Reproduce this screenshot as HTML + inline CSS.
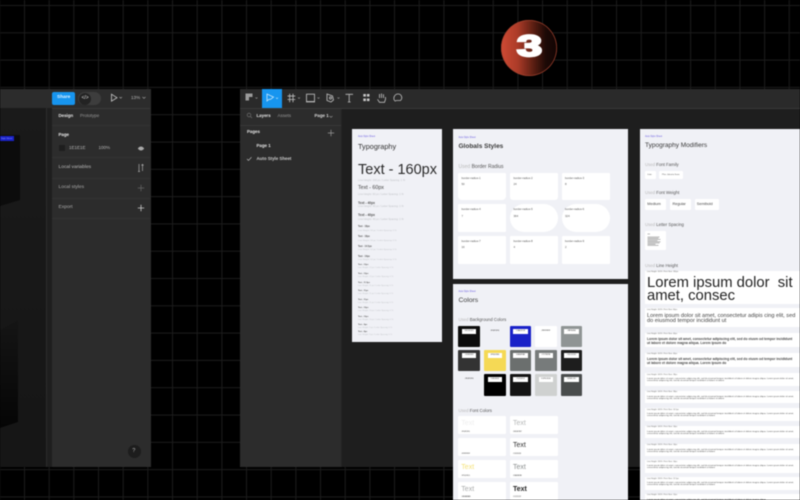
<!DOCTYPE html>
<html lang="en"><head><meta charset="utf-8"><title>Figma style sheet</title>
<style>
html,body{margin:0;padding:0;width:800px;height:500px;overflow:hidden;background:#000}
body{position:relative;font-family:"Liberation Sans",sans-serif}
#all{position:absolute;left:0;top:0;width:800px;height:500px;overflow:hidden;filter:blur(.42px)}
.a,.t{position:absolute}
.t{white-space:nowrap;line-height:1}
.w{color:#e8e8e8;font-size:4.4px;font-weight:700}
.g{color:#b5b5b5;font-size:4.9px}
.s{color:#c2c4c8;font-size:2.6px}
.h{color:#555;font-size:2.9px;font-weight:700}
.b{background:#fff}
.bl{color:#555;font-size:2.8px}
.p{color:#6a5ce0;font-size:2.3px}
.sec{color:#555;font-size:4.3px}
.sec i{color:#bbb;font-style:normal}
.c{position:absolute;width:21.5px;height:21.5px;border-radius:1px}
.c b{position:absolute;left:3.5px;top:3px;width:14.5px;height:5.2px;background:#fff;color:#333;font-size:2.2px;line-height:5.2px;text-align:center;font-weight:400}
.f{position:absolute;width:47.5px;height:18px;background:#fff;border-radius:1px}
.f span{position:absolute;left:3px;top:3.5px;font-size:7px;line-height:1;color:#333}
.f em{position:absolute;left:3px;top:14.4px;font-size:2.1px;line-height:1;color:#444;font-style:normal}
.r{position:absolute;left:645px;width:155px;background:#fff}
.r .l{position:absolute;left:2px;top:1.6px;font-size:1.9px;color:#666;white-space:nowrap;line-height:1}
.r .x{position:absolute;left:2px;top:5px;font-size:2.2px;line-height:2.2px;color:#444;width:152px}
</style></head><body><div id="all">

<svg class="a" style="left:0;top:0" width="800" height="500">
<defs><pattern id="gr" x="-0.67" y="5" width="24.67" height="27.3" patternUnits="userSpaceOnUse">
<rect x="0" y="0" width="1" height="27.3" fill="#1c1c1c"/><rect x="0" y="0" width="24.67" height="1" fill="#1c1c1c"/></pattern></defs>
<rect width="800" height="500" fill="url(#gr)"/></svg>

<!-- badge -->
<div class="a" style="left:501px;top:20px;width:56px;height:56px;border-radius:50%;background:linear-gradient(90deg,#cf4a34 0%,#ab3b28 30%,#5a1e12 58%,#1c0906 80%,#120504 100%);box-shadow:inset 0 0 0 .7px #a5432f"></div>
<div class="t" style="left:516.500px;top:32px;font-size:30px;font-weight:700;color:#fff;-webkit-text-stroke:2.2px #fff;transform:scaleX(1.5);transform-origin:0 0">3</div>

<!-- left window -->
<div class="a" style="left:0;top:89px;width:150.5px;height:378px;background:#2c2c2c"></div>
<div class="a" style="left:0;top:108px;width:52px;height:359px;background:#1e1e1e"></div>
<div class="a" style="left:0;top:108px;width:46px;height:359px;background:linear-gradient(180deg,#1a1a1a,#161616)"></div>
<div class="a" style="left:46px;top:108px;width:1px;height:359px;background:#2c2c2c"></div>
<svg class="a" style="left:0;top:130px" width="24" height="300"><defs><linearGradient id="sh" x1="0" y1="0" x2="0" y2="1"><stop offset="0" stop-color="#151515"/><stop offset="1" stop-color="#050505"/></linearGradient></defs><polygon points="0,5 20,5 20,70 0,76" fill="#0c0c0c"/><polygon points="0,200 18,190 18,292 0,298" fill="url(#sh)"/></svg>
<div class="a" style="left:0;top:136px;width:13.5px;height:5px;background:#1a22c8"></div>
<div class="t" style="left:1px;top:137.500px;font-size:2.200px;color:#9aa0ff">Style Sheet</div>
<div class="a" style="left:52px;top:92px;width:23px;height:13px;background:#1795ef;border-radius:2px"></div>
<div class="t" style="left:57px;top:95.5px;font-size:4.8px;font-weight:700;color:#dff1ff">Share</div>
<div class="a" style="left:78px;top:92px;width:23px;height:13px;background:#3d3d3d;border-radius:7px"></div>
<div class="a" style="left:79px;top:92.5px;width:12px;height:12px;background:#232323;border-radius:50%"></div>
<div class="t" style="left:81.5px;top:95.5px;font-size:5px;color:#ddd">&lt;/&gt;</div>
<svg class="a" style="left:110px;top:93px" width="14" height="10"><path d="M1.5 1.2v7l5.5-3.5z" fill="none" stroke="#ccc" stroke-width=".8"/><path d="M9.5 4l1.2 1.2L12 4" fill="none" stroke="#aaa" stroke-width=".6"/></svg>
<div class="t g" style="left:131px;top:95.5px;font-size:4.6px">13%</div>
<svg class="a" style="left:141.5px;top:95.5px" width="5" height="4"><path d="M.5 1l1.5 1.3L3.500 1" fill="none" stroke="#aaa" stroke-width=".6"/></svg>
<div class="a" style="left:52px;top:107.5px;width:98px;height:.6px;background:#3a3a3a"></div>
<div class="t w" style="left:58.5px;top:114px">Design</div>
<div class="t g" style="left:80px;top:114px;color:#999;font-size:4.5px">Prototype</div>
<div class="a" style="left:52px;top:124.5px;width:98px;height:.6px;background:#333"></div>
<div class="t w" style="left:58.5px;top:132.5px;color:#eee">Page</div>
<div class="a" style="left:59px;top:145px;width:6px;height:6px;background:#1e1e1e"></div>
<div class="t g" style="left:69px;top:145.5px;font-size:4.500px">1E1E1E</div>
<div class="t g" style="left:98.5px;top:145.5px;font-size:4.500px">100%</div>
<svg class="a" style="left:137px;top:144.5px" width="8" height="7"><path d="M.8 3.5c2-2.6 4.4-2.6 6.4 0-2 2.6-4.4 2.6-6.4 0z" fill="#aaa"/></svg>
<div class="a" style="left:52px;top:157px;width:98px;height:.6px;background:#333"></div>
<div class="t g" style="left:58.5px;top:166px;color:#bbb">Local variables</div>
<svg class="a" style="left:137px;top:163px" width="8" height="10"><path d="M2 1v7.5M1 8.5h2M5.5 8V1.5M4.5 2.5l1-1.2 1 1.2" fill="none" stroke="#aaa" stroke-width=".7"/></svg>
<div class="a" style="left:52px;top:178px;width:98px;height:.6px;background:#333"></div>
<div class="t g" style="left:58.5px;top:186px;color:#aaa">Local styles</div>
<svg class="a" style="left:137px;top:184px" width="8" height="8"><path d="M4 .8v6.4M.8 4h6.4" stroke="#666" stroke-width=".7"/></svg>
<div class="a" style="left:52px;top:198px;width:98px;height:.6px;background:#333"></div>
<div class="t g" style="left:58.5px;top:206px;color:#aaa">Export</div>
<svg class="a" style="left:137px;top:204px" width="8" height="8"><path d="M4 .8v6.4M.8 4h6.400" stroke="#ccc" stroke-width=".8"/></svg>
<div class="a" style="left:52px;top:218px;width:98px;height:.6px;background:#333"></div>
<div class="a" style="left:128px;top:445px;width:12.5px;height:12.5px;background:#1d1d1d;border-radius:50%"></div>
<div class="t" style="left:132.3px;top:448.5px;font-size:5.6px;color:#bbb">?</div>

<!-- main window -->
<div class="a" style="left:240px;top:89px;width:560px;height:378px;background:#1e1e1e"></div>
<div class="a" style="left:240px;top:89px;width:560px;height:19px;background:#2a2a2a"></div>
<div class="a" style="left:240px;top:107.5px;width:101px;height:359.5px;background:#2c2c2c"></div>
<div class="a" style="left:341px;top:108px;width:.6px;height:359px;background:#242424"></div>
<div class="a" style="left:240px;top:107.5px;width:560px;height:.6px;background:#3a3a3a"></div>
<div class="a" style="left:261.5px;top:88.5px;width:20px;height:19.5px;background:#1795ef"></div>
<svg class="a" style="left:240px;top:88px" width="170" height="20" fill="none" stroke="#bdbdbd" stroke-width=".85">
<path d="M5.5 5.500h7v3.500H9v3.500H5.500z" fill="#9a9a9a" stroke="none"/><path d="M15.500 9.500l1 1 1-1" stroke="#999" stroke-width=".6"/>
<path d="M27 6v7l2-1.700 1.500 0 3-2.200z" stroke="#bfe3fb"/><path d="M36 9.700l1 1 1-1" stroke="#bfe3fb" stroke-width=".6"/>
<path d="M49.700 5.700v8.500M53 5.700v8.500M47.500 8.100h7.800M47.500 11.500h7.800"/><path d="M58 9.500l1 1 1-1" stroke="#999" stroke-width=".6"/>
<rect x="66.500" y="6.200" width="8" height="7.300"/><path d="M66 13.900h9"/><path d="M77.500 9.500l1 1 1-1" stroke="#999" stroke-width=".6"/>
<path d="M87 6l5.500 2 1 4-2.500 2-4-1.500z"/><circle cx="90.500" cy="10" r="1.100"/><path d="M97.500 9.500l1 1 1-1" stroke="#999" stroke-width=".6"/>
<path d="M105.500 6.300h7.500M109.200 6.300v7.700M107.800 14h2.800"/>
<g fill="#c8c8c8" stroke="none"><rect x="123.300" y="6" width="2.600" height="2.600"/><rect x="126.900" y="6" width="2.600" height="2.600"/><rect x="123.300" y="10.500" width="2.600" height="2.600"/><rect x="126.900" y="10.500" width="2.600" height="2.600"/></g>
<path d="M139.500 10V7.500m0 2.500V6m2 4V5.500m2 4.500V6.300m-6 5l2 3h5l1-3V9"/>
<path d="M155 13c-2.500-2.500-.5-7 3-7 3.500 0 5 4 2.500 6.500h-4z"/>
</svg>
<svg class="a" style="left:246px;top:112px" width="7" height="7" fill="none" stroke="#777" stroke-width=".6"><circle cx="3" cy="3" r="1.800"/><path d="M4.400 4.400l1.600 1.600"/></svg>
<div class="t w" style="left:256.500px;top:113.500px">Layers</div>
<div class="t g" style="left:277.500px;top:113.500px;color:#9a9a9a;font-size:4.500px">Assets</div>
<div class="t w" style="left:314.500px;top:113.500px;color:#ddd">Page 1</div>
<svg class="a" style="left:329px;top:114.500px" width="5" height="4"><path d="M.5 1l1.500 1.300L3.500 1" fill="none" stroke="#999" stroke-width=".6"/></svg>
<div class="a" style="left:240px;top:124.500px;width:101px;height:.6px;background:#383838"></div>
<div class="t w" style="left:247px;top:130px">Pages</div>
<svg class="a" style="left:327px;top:129px" width="8" height="8"><path d="M4 .800v6.400M.8 4h6.400" stroke="#999" stroke-width=".7"/></svg>
<div class="t w" style="left:256.500px;top:143.500px">Page 1</div>
<svg class="a" style="left:246px;top:156px" width="7" height="6"><path d="M1 3l1.500 1.500L5.500 1.200" fill="none" stroke="#ccc" stroke-width=".6"/></svg>
<div class="t w" style="left:256.500px;top:157px;color:#ccc">Auto Style Sheet</div>

<!-- Typography card -->
<div class="a" style="left:352px;top:128.500px;width:90px;height:213.500px;background:#f0f1f6"></div>
<div class="t p" style="left:358px;top:136px">Auto Style Sheet</div>
<div class="t" style="left:358px;top:142.500px;font-size:7.300px;color:#333">Typography</div>
<div class="t" style="left:358px;top:162.500px;font-size:14.500px;color:#2a2a2a">Text - 160px</div>
<div class="t s" style="left:358px;top:180px">Line Height: 160 px / Letter Spacing: 1 %</div>
<div class="t" style="left:358px;top:186px;font-size:5.300px;color:#444">Text - 60px</div>
<div class="t s" style="left:358px;top:194px">Line Height: 60 px / Letter Spacing: 1 %</div>
<div class="t h" style="left:358px;top:201.500px;font-size:3.300px">Text - 40px</div>
<div class="t s" style="left:358px;top:206.300px">Line Height: 40 px / Letter Spacing: 1 %</div>
<div class="t h" style="left:358px;top:214px;font-size:3.300px">Text - 40px</div>
<div class="t s" style="left:358px;top:218.800px">Line Height: 40 px / Letter Spacing: 1 %</div>
<div class="t h" style="left:358px;top:226px;font-size:2.300px">Text - 18px</div><div class="t s" style="left:358px;top:229.600px;font-size:2.200px">Line Height: 18 px / Letter Spacing: 0 %</div>
<div class="t h" style="left:358px;top:236px;font-size:2.300px">Text - 18px</div><div class="t s" style="left:358px;top:239.500px;font-size:2.200px">Line Height: 18 px / Letter Spacing: 0 %</div>
<div class="t h" style="left:358px;top:246px;font-size:2.300px">Text - 14.5px</div><div class="t s" style="left:358px;top:249.400px;font-size:2.200px">Line Height: 14 px / Letter Spacing: 0 %</div>
<div class="t h" style="left:358px;top:255.600px;font-size:2.300px">Text - 14px</div><div class="t s" style="left:358px;top:258.800px;font-size:2.200px">Line Height: 14 px / Letter Spacing: 0 %</div>
<div class="t h" style="left:358px;top:264px;font-size:2px">Text - 12px</div><div class="t s" style="left:358px;top:267.300px;font-size:2px">Line Height: 12 px / Letter Spacing: 0 %</div>
<div class="t h" style="left:358px;top:273px;font-size:2px">Text - 12px</div><div class="t s" style="left:358px;top:276.300px;font-size:2px">Line Height: 12 px / Letter Spacing: 0 %</div>
<div class="t h" style="left:358px;top:281.500px;font-size:2px">Text - 11.5px</div><div class="t s" style="left:358px;top:284.500px;font-size:2px">Line Height: 11 px / Letter Spacing: 0 %</div>
<div class="t h" style="left:358px;top:290px;font-size:2px">Text - 11px</div><div class="t s" style="left:358px;top:293px;font-size:2px">Line Height: 11 px / Letter Spacing: 0 %</div>
<div class="t h" style="left:358px;top:299px;font-size:2px">Text - 11px</div><div class="t s" style="left:358px;top:302px;font-size:2px">Line Height: 11 px / Letter Spacing: 0 %</div>
<div class="t h" style="left:358px;top:307px;font-size:2px">Text - 10px</div><div class="t s" style="left:358px;top:310px;font-size:2px">Line Height: 10 px / Letter Spacing: 0 %</div>
<div class="t h" style="left:358px;top:315.500px;font-size:2px">Text - 10px</div><div class="t s" style="left:358px;top:318.500px;font-size:2px">Line Height: 10 px / Letter Spacing: 0 %</div>
<div class="t h" style="left:358px;top:323.500px;font-size:2px">Text - 9px</div><div class="t s" style="left:358px;top:326.500px;font-size:2px">Line Height: 9 px / Letter Spacing: 0 %</div>
<div class="t h" style="left:358px;top:331px;font-size:2px">Text - 8px</div><div class="t s" style="left:358px;top:334px;font-size:2px">Line Height: 8 px / Letter Spacing: 0 %</div>

<!-- Globals card -->
<div class="a" style="left:453px;top:129px;width:175px;height:149.500px;background:#f0f1f6"></div>
<div class="t p" style="left:458.500px;top:136.500px">Auto Style Sheet</div>
<div class="t" style="left:458.500px;top:143.500px;font-size:6.500px;color:#3a3a3a;font-weight:700">Globals Styles</div>
<div class="t sec" style="left:458.500px;top:165px;font-size:5px"><i>Used</i> Border Radius</div>
<div class="a b" style="left:458.300px;top:173px;width:47.700px;height:27px;border-radius:1px 1px 4px 4px"></div><div class="t bl" style="left:461.500px;top:176.500px">border-radius-1</div><div class="t bl" style="left:461.500px;top:183px">50</div>
<div class="a b" style="left:510.300px;top:173px;width:47.500px;height:27px;border-radius:1px 1px 3px 3px"></div><div class="t bl" style="left:513.500px;top:176.500px">border-radius-2</div><div class="t bl" style="left:513.500px;top:183px">24</div>
<div class="a b" style="left:562px;top:173px;width:47.700px;height:27px;border-radius:1px"></div><div class="t bl" style="left:565px;top:176.500px">border-radius-3</div><div class="t bl" style="left:565px;top:183px">8</div>
<div class="a b" style="left:458.300px;top:204.300px;width:47.700px;height:28px;border-radius:1px"></div><div class="t bl" style="left:461.500px;top:208px">border-radius-4</div><div class="t bl" style="left:461.500px;top:214.500px">7</div>
<div class="a b" style="left:510.300px;top:204.300px;width:47.500px;height:28px;border-radius:14px"></div><div class="t bl" style="left:513.500px;top:208px">border-radius-5</div><div class="t bl" style="left:513.500px;top:214.500px">364</div>
<div class="a b" style="left:562px;top:204.300px;width:47.700px;height:28px;border-radius:14px"></div><div class="t bl" style="left:565px;top:208px">border-radius-6</div><div class="t bl" style="left:565px;top:214.500px">324</div>
<div class="a b" style="left:458.300px;top:236px;width:47.700px;height:27.700px;border-radius:1px"></div><div class="t bl" style="left:461.500px;top:239.500px">border-radius-7</div><div class="t bl" style="left:461.500px;top:246px">16</div>
<div class="a b" style="left:510.300px;top:236px;width:47.500px;height:27.700px;border-radius:1px"></div><div class="t bl" style="left:513.500px;top:239.500px">border-radius-8</div><div class="t bl" style="left:513.500px;top:246px">4</div>
<div class="a b" style="left:562px;top:236px;width:47.700px;height:27.700px;border-radius:1px"></div><div class="t bl" style="left:565px;top:239.500px">border-radius-9</div><div class="t bl" style="left:565px;top:246px">2</div>

<!-- Colors card -->
<div class="a" style="left:453px;top:284px;width:175px;height:216px;background:#f0f1f6"></div>
<div class="t p" style="left:458.500px;top:291px">Auto Style Sheet</div>
<div class="t" style="left:458.500px;top:297.500px;font-size:6.800px;color:#3a3a3a">Colors</div>
<div class="t sec" style="left:458.500px;top:318px"><i>Used</i> Background Colors</div>
<div class="c" style="left:458.300px;top:325.700px;background:#0c0c0c"><b>#0C0C0C</b></div>
<div class="c" style="left:484px;top:325.700px;background:#f0f1f6"><b style="background:#f0f1f6">#F0F1F6</b></div>
<div class="c" style="left:509.700px;top:325.700px;background:#1a22c8"><b>#1A22C8</b></div>
<div class="c" style="left:535px;top:325.700px;background:#fff"><b>#FFFFFF</b></div>
<div class="c" style="left:560.700px;top:325.700px;background:#8f9494"><b>#8F9494</b></div>
<div class="c" style="left:458.300px;top:349.700px;background:#333"><b>#333333</b></div>
<div class="c" style="left:484px;top:349.700px;background:#f5d955"><b>#F5D955</b></div>
<div class="c" style="left:509.700px;top:349.700px;background:#6b6f6e"><b>#6B6F6E</b></div>
<div class="c" style="left:535px;top:349.700px;background:#777b7b"><b>#777B7B</b></div>
<div class="c" style="left:560.700px;top:349.700px;background:#1d1d1d"><b>#1D1D1D</b></div>
<div class="c" style="left:458.300px;top:374px;background:#f0f1f6"><b style="background:#f0f1f6">#F0F1F6</b></div>
<div class="c" style="left:484px;top:374px;background:#000"><b>#000000</b></div>
<div class="c" style="left:509.700px;top:374px;background:#141414"><b>#141414</b></div>
<div class="c" style="left:535px;top:374px;background:#cfd1d0"><b>#CFD1D0</b></div>
<div class="c" style="left:560.700px;top:374px;background:#494c4c"><b>#494C4C</b></div>
<div class="t sec" style="left:458.500px;top:409px"><i>Used</i> Font Colors</div>
<div class="f" style="left:458.300px;top:416.300px"><span style="color:#eee">Text</span><em>#F0F1F6</em></div>
<div class="f" style="left:510px;top:416.300px"><span style="color:#b5b7b7">Text</span><em>#B5B7B7</em></div>
<div class="f" style="left:458.300px;top:438.300px"><span style="color:#fff">Text</span><em>#FFFFFF</em></div>
<div class="f" style="left:510px;top:438.300px"><span style="color:#333">Text</span><em>#333333</em></div>
<div class="f" style="left:458.300px;top:460.300px"><span style="color:#f5e27a">Text</span><em>#F5D955</em></div>
<div class="f" style="left:510px;top:460.300px"><span style="color:#8a8e8e">Text</span><em>#8A8E8E</em></div>
<div class="f" style="left:458.300px;top:482px"><span style="color:#a9abab">Text</span><em>#A9ABAB</em></div>
<div class="f" style="left:510px;top:482px"><span style="color:#222;font-weight:700">Text</span><em>#222222</em></div>

<!-- Modifiers card -->
<div class="a" style="left:640px;top:129px;width:160px;height:371px;background:#f0f1f6"></div>
<div class="t p" style="left:645px;top:136px">Auto Style Sheet</div>
<div class="t" style="left:645px;top:142.500px;font-size:6.500px;color:#3a3a3a">Typography Modifiers</div>
<div class="t sec" style="left:645px;top:163px"><i>Used</i> Font Family</div>
<div class="a b" style="left:645px;top:170.500px;width:10.700px;height:8px;border-radius:1px"></div><div class="t" style="left:647.500px;top:173.500px;font-size:2.200px;color:#555">Inter</div>
<div class="a b" style="left:659.300px;top:170.500px;width:23.500px;height:8px;border-radius:1px"></div><div class="t" style="left:662px;top:173.500px;font-size:2.200px;color:#555">Plus Jakarta Sans</div>
<div class="t sec" style="left:645px;top:191px"><i>Used</i> Font Weight</div>
<div class="a b" style="left:645px;top:199px;width:21px;height:11px;border-radius:1px"></div><div class="t" style="left:647.300px;top:202.800px;font-size:3.800px;color:#444">Medium</div>
<div class="a b" style="left:669.500px;top:199px;width:21px;height:11px;border-radius:1px"></div><div class="t" style="left:672.500px;top:202.800px;font-size:3.800px;color:#444">Regular</div>
<div class="a b" style="left:694.500px;top:199px;width:24px;height:11px;border-radius:1px"></div><div class="t" style="left:696.800px;top:202.800px;font-size:3.800px;color:#444">Semibold</div>
<div class="t sec" style="left:645px;top:223px"><i>Used</i> Letter Spacing</div>
<div class="a b" style="left:645px;top:230.500px;width:21px;height:19.500px;border-radius:1px"></div>
<svg class="a" style="left:647px;top:233px" width="16" height="15"><g stroke="#777" stroke-width=".5"><path d="M.5 1h2.500"/><path d="M.5 4h12M.5 5.200h11M.5 6.400h13M.5 7.600h10M.5 8.800h13M.5 10h12M.5 11.200h8M.5 12.400h11"/></g></svg>
<div class="t sec" style="left:645px;top:263.500px"><i>Used</i> Line Height</div>
<div class="r" style="top:270.700px;height:33.300px"><span class="l">Line Height: 100% / Font Size: 160px</span><div style="position:absolute;left:2px;top:6px;font-size:14.800px;line-height:13px;color:#222;white-space:pre">Lorem ipsum dolor  sit
amet, consec</div></div>
<div class="r" style="top:308px;height:19.300px"><span class="l">Line Height: 100% / Font Size: 60px</span><div style="position:absolute;left:2px;top:5.800px;font-size:5.600px;line-height:5.400px;color:#444;white-space:pre">Lorem ipsum dolor sit amet, consectetur adipis cing elit, sed
do eiusmod tempor incididunt ut</div></div>
<div class="r" style="top:332.700px;height:14.500px"><span class="l">Line Height: 100% / Font Size: 40px</span><div style="position:absolute;left:2px;top:4.400px;font-size:3.350px;line-height:4px;color:#444;font-weight:700;white-space:pre">Lorem ipsum dolor sit amet, consectetur adipiscing elit, sed do eiusm od tempor incididunt
ut labore et dolore magna aliqua. Lorem ipsum do</div></div>
<div class="r" style="top:352.700px;height:14.500px"><span class="l">Line Height: 100% / Font Size: 40px</span><div style="position:absolute;left:2px;top:4.400px;font-size:3.350px;line-height:4px;color:#444;font-weight:700;white-space:pre">Lorem ipsum dolor sit amet, consectetur adipiscing elit, sed do eiusm od tempor incididunt
ut labore et dolore magna aliqua. Lorem ipsum do</div></div>
<div class="r" style="top:373px;height:12.500px"><span class="l">Line Height: 140% / Font Size: 18px</span><div class="x">Lorem ipsum dolor sit amet, consectetur adipiscing elit, sed do eiusmod tempor incididunt ut labore et dolore magna aliqua. Lorem ipsum dolor sit amet, consectetur adipiscing elit, sed do eiusmod tempor incididunt ut labore et dolore</div></div>
<div class="r" style="top:390.500px;height:12.500px"><span class="l">Line Height: 140% / Font Size: 18px</span><div class="x">Lorem ipsum dolor sit amet, consectetur adipiscing elit, sed do eiusmod tempor incididunt ut labore et dolore magna aliqua. Lorem ipsum dolor sit amet, consectetur adipiscing elit, sed do eiusmod tempor incididunt ut labore et dolore</div></div>
<div class="r" style="top:408px;height:12.500px"><span class="l">Line Height: 140% / Font Size: 14.5px</span><div class="x">Lorem ipsum dolor sit amet, consectetur adipiscing elit, sed do eiusmod tempor incididunt ut labore et dolore magna aliqua. Lorem ipsum dolor sit amet, consectetur adipiscing elit, sed do eiusmod tempor incididunt ut labore</div></div>
<div class="r" style="top:425.500px;height:12.500px"><span class="l">Line Height: 140% / Font Size: 14px</span><div class="x">Lorem ipsum dolor sit amet, consectetur adipiscing elit, sed do eiusmod tempor incididunt ut labore et dolore magna aliqua. Lorem ipsum dolor sit amet, consectetur adipiscing elit, sed do eiusmod tempor incididunt ut labore et dolore</div></div>
<div class="r" style="top:443.500px;height:12.500px"><span class="l">Line Height: 130% / Font Size: 14px</span><div class="x">Lorem ipsum dolor sit amet, consectetur adipiscing elit, sed do eiusmod tempor incididunt ut labore et dolore magna aliqua. Lorem ipsum dolor sit amet, consectetur adipiscing elit, sed do eiusmod tempor incididunt ut labore</div></div>
<div class="r" style="top:460px;height:12.500px"><span class="l">Line Height: 130% / Font Size: 14px</span><div class="x">Lorem ipsum dolor sit amet, consectetur adipiscing elit, sed do eiusmod tempor incididunt ut labore et dolore magna aliqua. Lorem ipsum dolor sit amet, consectetur adipiscing elit, sed do eiusmod tempor incididunt ut labore</div></div>
<div class="r" style="top:477px;height:12.500px"><span class="l">Line Height: 130% / Font Size: 12.5px</span><div class="x">Lorem ipsum dolor sit amet, consectetur adipiscing elit, sed do eiusmod tempor incididunt ut labore et dolore magna aliqua. Lorem ipsum dolor sit amet, consectetur adipiscing elit, sed do eiusmod tempor incididunt ut labore</div></div>
<div class="r" style="top:493.500px;height:7px"><span class="l">Line Height: 130% / Font Size: 12px</span><div class="x">Lorem ipsum dolor sit amet, consectetur adipiscing elit, sed do eiusmod tempor incididunt ut labore et dolore magna aliqua.</div></div>

</div></body></html>
